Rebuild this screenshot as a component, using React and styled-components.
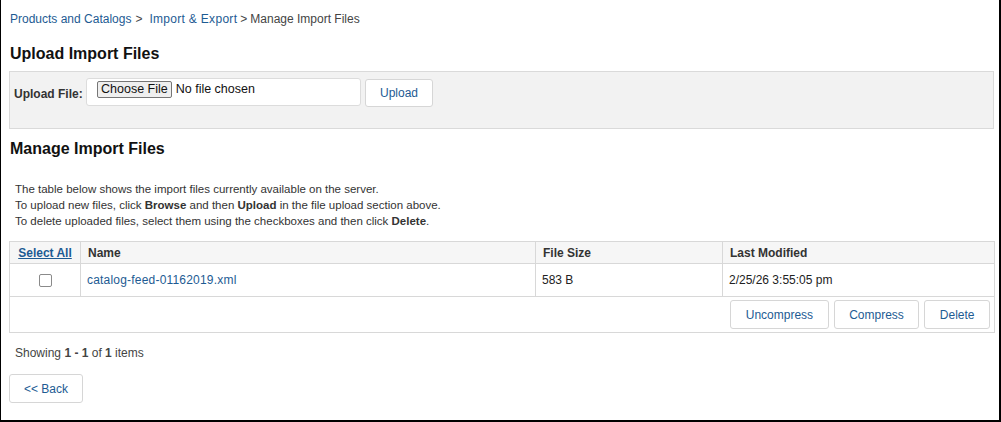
import React from "react";
import styled, { createGlobalStyle } from "styled-components";

const Global = createGlobalStyle`
  html, body { margin: 0; padding: 0; background: #fff; }
  body { font-family: "Liberation Sans", Arial, Helvetica, sans-serif; color: #333; }
  * { box-sizing: border-box; }
`;

const Frame = styled.div`
  width: 1001px;
  height: 422px;
  border-left: 1px solid #000;
  border-right: 2px solid #000;
  border-bottom: 2px solid #000;
  padding: 11px 5px 0 8px;
  display: flex;
  flex-direction: column;
  overflow: hidden;
`;

const Breadcrumb = styled.div`
  font-size: 12px;
  line-height: 16px;
  color: #444;
  padding-left: 1px;
`;

const Crumb = styled.a`
  color: #1d5b93;
  text-decoration: none;
  letter-spacing: ${(p) => p.$ls || 0}px;
`;

const Sep = styled.span`
  margin: 0 ${(p) => p.$after}px 0 ${(p) => p.$before}px;
  color: #444;
`;

const Heading = styled.h2`
  margin: ${(p) => p.$mt}px 0 0 1px;
  font-size: 16px;
  line-height: 19px;
  font-weight: bold;
  color: #111;
`;

const Panel = styled.div`
  margin-top: 8px;
  height: 58px;
  background: #f2f2f2;
  border: 1px solid #dadada;
  display: flex;
  align-items: flex-start;
  padding: 6px 0 0 4px;
`;

const Label = styled.label`
  font-size: 12px;
  font-weight: bold;
  color: #333;
  margin-top: 9px;
  width: 72px;
`;

const FileBox = styled.div`
  width: 275px;
  height: 28px;
  background: #fff;
  border: 1px solid #dcdcdc;
  border-radius: 3px;
  display: flex;
  align-items: flex-start;
  padding: 2px 0 0 10px;
  font-size: 12.5px;
  color: #111;
`;

const ChooseBtn = styled.span`
  display: inline-block;
  height: 17px;
  line-height: 15px;
  padding: 0 3px;
  background: #efefef;
  border: 1px solid #767676;
  border-radius: 2px;
  font-size: 12.5px;
  color: #111;
  margin-right: 4px;
`;

const NoFile = styled.span`
  line-height: 17px;
`;

const Button = styled.button`
  height: ${(p) => p.$h || 29}px;
  padding: 0 ${(p) => p.$px || 14}px;
  background: #fff;
  border: 1px solid #d6d6d6;
  border-radius: 3px;
  color: #1d5b93;
  font-family: "Liberation Sans", Arial, sans-serif;
  font-size: 12px;
  cursor: pointer;
  margin-left: ${(p) => p.$ml || 0}px;
  margin-top: ${(p) => p.$mt || 0}px;
`;

const Intro = styled.div`
  margin-top: 23px;
  padding-left: 6px;
  font-size: 11.5px;
  line-height: 16px;
  color: #333;
`;

const Table = styled.table`
  margin-top: 12px;
  width: 985px;
  border-collapse: collapse;
  font-size: 12px;
  table-layout: fixed;
`;

const Th = styled.th`
  height: 22px;
  background: #f6f6f6;
  border: 1px solid #d8d8d8;
  text-align: ${(p) => p.$align || "left"};
  padding: 0 7px;
  font-weight: bold;
  color: #333;
`;

const Td = styled.td`
  height: 33px;
  border: 1px solid #d8d8d8;
  text-align: ${(p) => p.$align || "left"};
  padding: 0 6px;
  color: #222;
`;

const FootCell = styled.td`
  height: 36px;
  border: 1px solid #d8d8d8;
  padding: 0 4px 0 0;
`;

const FootBar = styled.div`
  display: flex;
  justify-content: flex-end;
  gap: 5px;
`;

const SelectAll = styled.a`
  color: #1d5b93;
  text-decoration: underline;
`;

const FileLink = styled.a`
  color: #1d5b93;
  text-decoration: none;
  letter-spacing: 0.2px;
`;

const Check = styled.span`
  display: inline-block;
  width: 13px;
  height: 13px;
  border: 1px solid #8a8a8a;
  border-radius: 2px;
  background: #fff;
  vertical-align: middle;
`;

const Showing = styled.div`
  margin-top: 13px;
  padding-left: 6px;
  font-size: 12px;
  line-height: 14px;
  color: #444;
`;

const BackRow = styled.div`
  margin-top: 14px;
  display: flex;
`;

export default function App() {
  return (
    <>
      <Global />
      <Frame>
        <Breadcrumb>
          <Crumb href="#">Products and Catalogs</Crumb>
          <Sep $before={4} $after={7}>&gt;</Sep>
          <Crumb href="#" $ls={0.3}>Import &amp; Export</Crumb>
          <Sep $before={3} $after={3}>&gt;</Sep>
          Manage Import Files
        </Breadcrumb>

        <Heading $mt={17}>Upload Import Files</Heading>
        <Panel>
          <Label>Upload File:</Label>
          <FileBox>
            <ChooseBtn>Choose File</ChooseBtn>
            <NoFile>No file chosen</NoFile>
          </FileBox>
          <Button $ml={4} $mt={1} $h={28} $px={14}>Upload</Button>
        </Panel>

        <Heading $mt={10}>Manage Import Files</Heading>
        <Intro>
          <div>The table below shows the import files currently available on the server.</div>
          <div>
            To upload new files, click <b>Browse</b> and then <b>Upload</b> in the file upload section above.
          </div>
          <div>
            To delete uploaded files, select them using the checkboxes and then click <b>Delete</b>.
          </div>
        </Intro>

        <Table>
          <colgroup>
            <col style={{ width: 71 }} />
            <col style={{ width: 455 }} />
            <col style={{ width: 187 }} />
            <col style={{ width: 272 }} />
          </colgroup>
          <thead>
            <tr>
              <Th $align="center">
                <SelectAll href="#">Select All</SelectAll>
              </Th>
              <Th>Name</Th>
              <Th>File Size</Th>
              <Th>Last Modified</Th>
            </tr>
          </thead>
          <tbody>
            <tr>
              <Td $align="center">
                <Check />
              </Td>
              <Td>
                <FileLink href="#">catalog-feed-01162019.xml</FileLink>
              </Td>
              <Td>583 B</Td>
              <Td>2/25/26 3:55:05 pm</Td>
            </tr>
            <tr>
              <FootCell colSpan={4}>
                <FootBar>
                  <Button $px={14.5}>Uncompress</Button>
                  <Button $px={14.5}>Compress</Button>
                  <Button $px={14.5}>Delete</Button>
                </FootBar>
              </FootCell>
            </tr>
          </tbody>
        </Table>

        <Showing>
          Showing <b>1 - 1</b> of <b>1</b> items
        </Showing>

        <BackRow>
          <Button $h={29} $px={14}>&lt;&lt; Back</Button>
        </BackRow>
      </Frame>
    </>
  );
}
